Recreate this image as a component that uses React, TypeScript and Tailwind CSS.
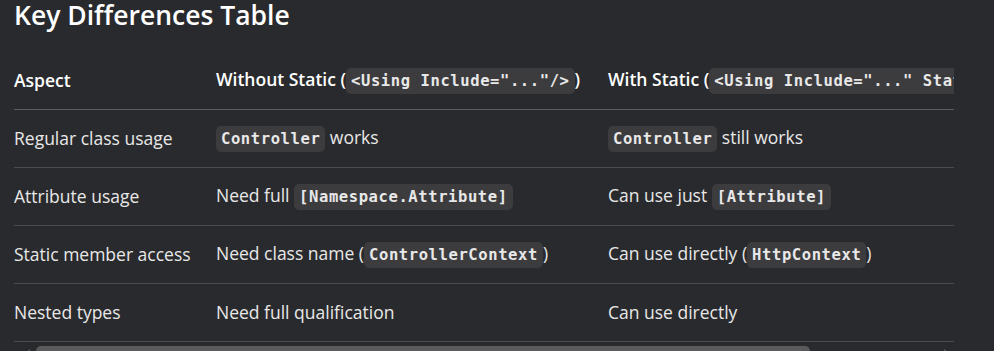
import React from "react";

const sans = "font-['Open_Sans','Noto_Sans',sans-serif]";

function Code({ children }: { children: React.ReactNode }) {
  return (
    <code className="inline-block rounded-[5px] bg-[#3c3c3e] px-[5px] align-middle font-['DejaVu_Sans_Mono',monospace] text-[15.5px] font-bold leading-[26px] text-[#e8e8e8] tracking-[0.6px]">
      {children}
    </code>
  );
}

const rows: { aspect: string; without: React.ReactNode; withS: React.ReactNode }[] = [
  {
    aspect: "Regular class usage",
    without: (
      <>
        <Code>Controller</Code> works
      </>
    ),
    withS: (
      <>
        <Code>Controller</Code> still works
      </>
    ),
  },
  {
    aspect: "Attribute usage",
    without: (
      <>
        Need full <Code>[Namespace.Attribute]</Code>
      </>
    ),
    withS: (
      <>
        Can use just <Code>[Attribute]</Code>
      </>
    ),
  },
  {
    aspect: "Static member access",
    without: (
      <>
        Need class name (<Code>ControllerContext</Code>)
      </>
    ),
    withS: (
      <>
        Can use directly (<Code>HttpContext</Code>)
      </>
    ),
  },
  {
    aspect: "Nested types",
    without: <>Need full qualification</>,
    withS: <>Can use directly</>,
  },
];

export default function App() {
  return (
    <div className={`h-[351px] w-[994px] overflow-hidden bg-[#292a2d] px-[14px] text-[#e8e8e8] ${sans}`}>
      <h2 className="-mt-[3px] text-[26.5px] font-semibold leading-[36px] text-white">Key Differences Table</h2>

      <div className="mt-[18px] w-[940px] overflow-hidden">
        <table className="w-max border-collapse whitespace-nowrap text-left text-[17.5px]">
          <thead>
            <tr className="h-[58px] border-b border-[#5c5d60]">
              <th className="w-[202px] pr-[24px] font-semibold text-white">Aspect</th>
              <th className="w-[392px] pr-[24px] font-semibold text-white">
                Without Static (<Code>{'<Using Include="..."/>'}</Code>)
              </th>
              <th className="pr-[24px] font-semibold text-white">
                With Static (<Code>{'<Using Include="..." Static="true"/>'}</Code>)
              </th>
            </tr>
          </thead>
          <tbody>
            {rows.map((r) => (
              <tr key={r.aspect} className="h-[58px] border-b border-[#4a4b4e]">
                <td className="pr-[24px]">{r.aspect}</td>
                <td className="pr-[24px]">{r.without}</td>
                <td className="pr-[24px]">{r.withS}</td>
              </tr>
            ))}
          </tbody>
        </table>
      </div>

      <div className="mt-[4px] flex h-[10px] w-[940px] items-start">
        <div className="ml-[10px] mt-[3px] h-0 w-0 border-y-[5px] border-r-[6px] border-y-transparent border-r-[#5a5a5a]" />
        <div className="ml-[6px] h-[10px] w-[774px] rounded-[5px] bg-[#5a5a5c]" />
        <div className="ml-auto mr-[4px] mt-[3px] h-0 w-0 border-y-[5px] border-l-[6px] border-y-transparent border-l-[#5a5a5a]" />
      </div>
    </div>
  );
}
